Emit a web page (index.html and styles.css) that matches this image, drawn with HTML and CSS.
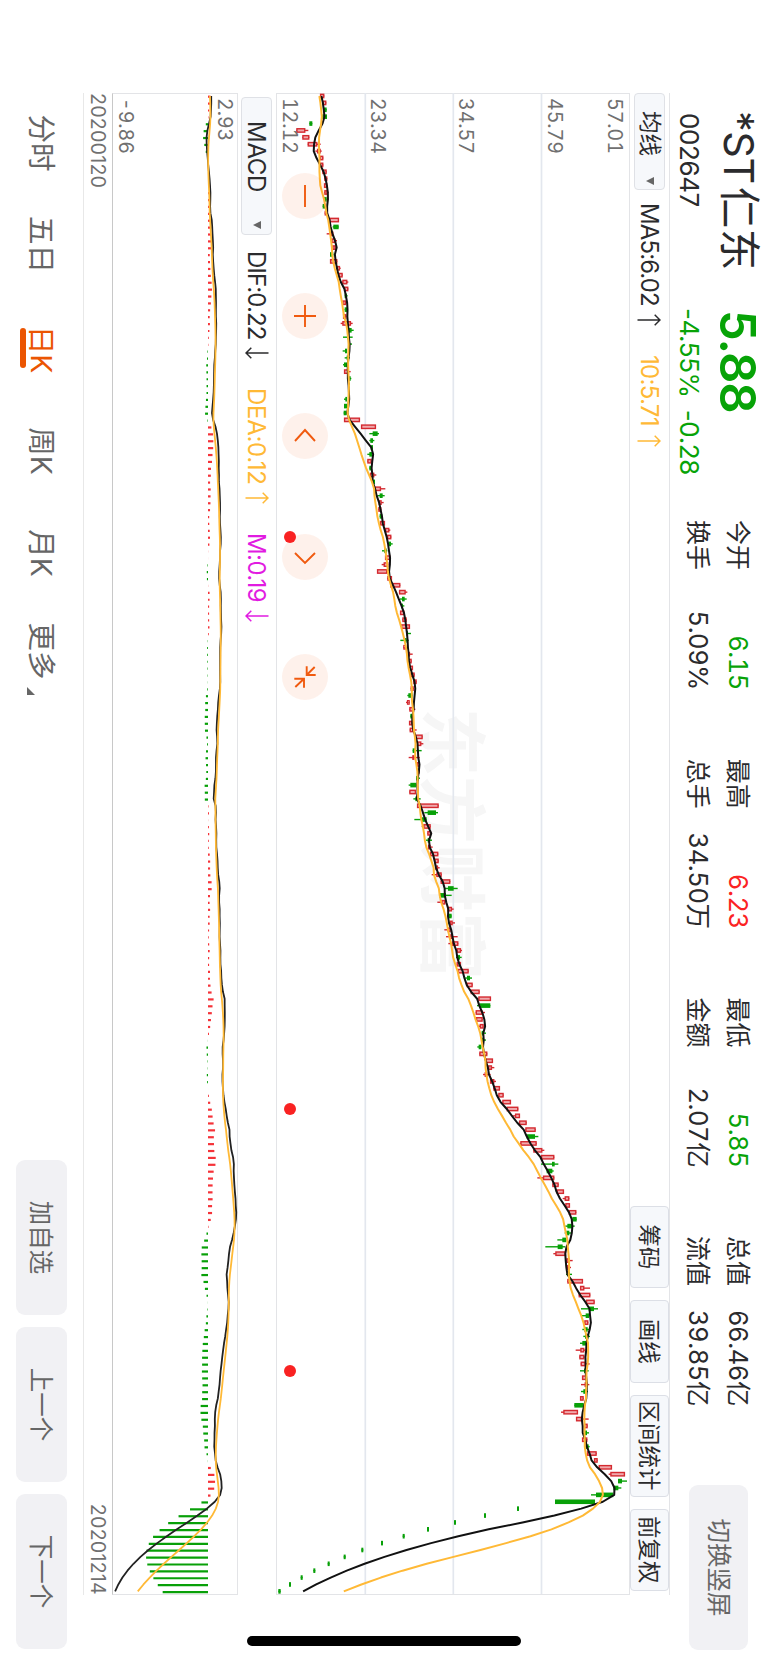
FILE: index.html
```html
<!DOCTYPE html>
<html lang="zh-CN">
<head>
    <meta charset="UTF-8">
    <meta name="viewport" content="width=device-width, initial-scale=1.0">
    <title>*ST仁东 002647</title>
    <link rel="stylesheet" href="styles.css">
</head>
<body>

    <!-- Landscape screen turned clockwise inside the portrait window -->
    <div class="screen">

        <!-- Quote header -->
        <header class="quote">
            <div class="stock">
                <div class="name"><span class="st">*ST</span>仁东</div>
                <div class="code">002647</div>
            </div>
            <div class="price down">
                <div class="last">5.88</div>
                <div class="change"><span>-4.55%</span><span>-0.28</span></div>
            </div>
            <div class="stats">
                <div class="stat"><span>今开</span><b class="down">6.15</b></div>
                <div class="stat"><span>最高</span><b class="up">6.23</b></div>
                <div class="stat"><span>最低</span><b class="down">5.85</b></div>
                <div class="stat"><span>总值</span><b>66.46亿</b></div>
                <div class="stat"><span>换手</span><b>5.09%</b></div>
                <div class="stat"><span>总手</span><b>34.50万</b></div>
                <div class="stat"><span>金额</span><b>2.07亿</b></div>
                <div class="stat"><span>流值</span><b>39.85亿</b></div>
            </div>
            <button class="btn rotate-btn">切换竖屏</button>
        </header>

        <!-- Charts -->
        <main class="charts">
            <div class="toolbar">
                <div class="select ma-select">均线<i class="caret"></i></div>
                <span class="ind ma5">MA5:6.02<svg class="arrow" viewBox="0 0 12 24"><path d="M6 23.5V1M.7 6.3L6 1l5.3 5.3"/></svg></span>
                <span class="ind ma10 yellow">10:5.71<svg class="arrow" viewBox="0 0 12 24"><path d="M6 23.5V1M.7 6.3L6 1l5.3 5.3"/></svg></span>
                <div class="tools">
                    <button>筹码</button>
                    <button>画线</button>
                    <button class="wide">区间统计</button>
                    <button>前复权</button>
                </div>
            </div>

            <div class="plot price-plot">
                <div class="watermark">东方财富</div>
                <svg id="priceChart" viewBox="0 0 1501 354"></svg>
                <ul class="scale">
                    <li>57.01</li>
                    <li>45.79</li>
                    <li>34.57</li>
                    <li>23.34</li>
                    <li>12.12</li>
                </ul>
                <div class="zoombar">
                    <svg viewBox="-23 -23 46 46"><path d="M-11 0H11"/></svg>
                    <svg viewBox="-23 -23 46 46"><path d="M-11 0H11M0-11V11"/></svg>
                    <svg viewBox="-23 -23 46 46"><path d="M5-10L-6 0 5 10"/></svg>
                    <svg viewBox="-23 -23 46 46"><path d="M-4-10L6 0-4 10"/></svg>
                    <svg viewBox="-23 -23 46 46"><path d="M-10.7-1.7H-2V-10.7M-2-1.7L-10-9.7M1.7 10.7V1H10.7M1.7 1L10 9.7"/></svg>
                </div>
                <i class="event e1"></i>
                <i class="event e2"></i>
                <i class="event e3"></i>
            </div>

            <div class="toolbar sub">
                <div class="select macd-select">MACD<i class="caret"></i></div>
                <span class="ind dif">DIF:0.22<svg class="arrow" viewBox="0 0 12 24"><path d="M6 .5V23M.7 17.7L6 23l5.3-5.3"/></svg></span>
                <span class="ind dea yellow">DEA:0.12<svg class="arrow" viewBox="0 0 12 24"><path d="M6 23.5V1M.7 6.3L6 1l5.3 5.3"/></svg></span>
                <span class="ind macd purple">M:0.19<svg class="arrow" viewBox="0 0 12 24"><path d="M6 .5V23M.7 17.7L6 23l5.3-5.3"/></svg></span>
            </div>

            <div class="plot macd-plot">
                <svg id="macdChart" viewBox="0 0 1501 125"></svg>
                <ul class="scale">
                    <li>2.93</li>
                    <li>-9.86</li>
                </ul>
            </div>

            <div class="dates"><span>20200120</span><span>20201214</span></div>
        </main>

        <!-- Period tabs and actions -->
        <footer class="footer">
            <nav class="tabs">
                <a>分时</a>
                <a>五日</a>
                <a class="active">日K</a>
                <a>周K</a>
                <a>月K</a>
                <a class="more">更多</a>
            </nav>
            <div class="actions">
                <button class="btn">加自选</button>
                <button class="btn">上一个</button>
                <button class="btn">下一个</button>
            </div>
        </footer>

        <div class="home-bar"></div>
    </div>

    <script src="chart.js"></script>
</body>
</html>
```
FILE: styles.css
```css
* {
    box-sizing: border-box;
}

html {
    overflow: hidden;
}

body {
    margin: 0;
    width: 768px;
    height: 1663px;
    overflow: hidden;
    background-color: #fff;
    color: #2b2b2d;
    font-family: Inter, "Noto Sans CJK SC", sans-serif;
}

button {
    border: none;
    padding: 0 0 3px;
    font-family: inherit;
    color: inherit;
}

ul {
    list-style: none;
    margin: 0;
    padding: 0;
}

.screen {
    position: relative;
    width: 1663px;
    height: 768px;
    display: flex;
    flex-direction: column;
    transform-origin: 0 0;
    transform: translateX(768px) rotate(90deg);
}

.up { color: #fb2323; }
.down { color: #07a307; }
.yellow { color: #ffb936; }
.purple { color: #e11be1; }

/* Quote header */
.quote {
    height: 98px;
    padding: 7px 13px 0 113px;
    display: flex;
    white-space: nowrap;
}

.stock {
    width: 197px;
}

.name {
    font-size: 41.5px;
    line-height: 44px;
    letter-spacing: 0.5px;
}

.st {
    letter-spacing: -0.5px;
    margin-left: -2px;
    margin-right: 3px;
}

.code,
.change {
    font-size: 26px;
    line-height: 32px;
    margin-top: 12px;
    letter-spacing: -0.4px;
}

.price {
    width: 210px;
}

.last {
    font-size: 49px;
    line-height: 46px;
    margin-top: 1px;
    font-weight: 600;
    letter-spacing: -1px;
}

.change {
    margin: 9px 0 0 -2px;
    display: flex;
    gap: 12px;
}

.stats {
    width: 884px;
    height: 80px;
    margin-top: 3px;
    display: grid;
    grid-template-columns: repeat(4, 168px);
    grid-template-rows: 40px 40px;
    column-gap: 70.7px;
    font-size: 25px;
    line-height: 40px;
}

.stat {
    display: flex;
    justify-content: space-between;
}

.stat b {
    margin-right: -2px;
    font-size: 25.5px;
    font-weight: 400;
    font-variant-numeric: tabular-nums;
    letter-spacing: -0.4px;
}

.btn {
    border-radius: 9px;
    background-color: #f1f1f4;
    color: #666;
    font-size: 24.5px;
}

.rotate-btn {
    width: 165px;
    height: 59px;
    margin: 13px 0 0 auto;
    padding-bottom: 5px;
}

/* Charts */
.charts {
    width: 1502px;
    margin-left: 93px;
}

.toolbar {
    position: relative;
    height: 40px;
    border-top: 1px solid #e3e4e7;
    display: flex;
    align-items: center;
    white-space: nowrap;
}

.toolbar.sub {
    height: 38px;
    border: none;
}

.select {
    height: 31px;
    border: 1px solid #dfe1e6;
    border-radius: 4px;
    background-color: #f6f8fb;
    display: flex;
    align-items: center;
    justify-content: space-between;
}

.ma-select {
    width: 97px;
    padding: 0 4px 2px 17px;
    font-size: 22.5px;
    line-height: 26px;
}

.macd-select {
    width: 138px;
    margin-left: 4px;
    padding: 0 5px 0 23px;
    font-size: 24px;
    letter-spacing: -0.3px;
}

.caret {
    border: 4.5px solid transparent;
    border-top: 8px solid #666;
    border-bottom: none;
}

.ind {
    display: flex;
    align-items: center;
    justify-content: space-between;
    font-size: 24px;
    letter-spacing: -0.9px;
}

.arrow {
    flex: none;
    width: 12px;
    height: 24px;
    fill: none;
    stroke: currentColor;
    stroke-width: 1.5;
}

.ma5 { width: 123px; margin-left: 13px; }
.ma10 { width: 92px; margin-left: 29px; letter-spacing: -0.7px; }
.dif { width: 108px; margin-left: 16px; }
.dea { width: 116px; margin-left: 29px; letter-spacing: -0.3px; }
.macd { width: 89px; margin-left: 29px; letter-spacing: -0.6px; }

.tools {
    height: 39px;
    margin: 0 4px 0 auto;
    display: flex;
    gap: 12px;
}

.tools button {
    width: 82.5px;
    border: 1px solid #dcdfe6;
    border-radius: 4px;
    background-color: #f6f8fb;
    font-size: 22.5px;
}

.tools .wide {
    width: 102px;
}

.plot {
    position: relative;
    border: 1px solid #e3e4e7;
}

.plot svg {
    display: block;
}

.price-plot {
    height: 354px;
}

.macd-plot {
    height: 126px;
    border-bottom-color: #c8c8c8;
}

#priceChart,
#macdChart {
    position: absolute;
    top: -1px;
    left: -1px;
    width: 1501px;
    overflow: visible;
}

.watermark {
    position: absolute;
    inset: -8px 0 0;
    display: flex;
    align-items: center;
    justify-content: center;
    font-size: 68px;
    font-weight: 700;
    color: #f6f6f6;
}

.scale {
    position: absolute;
    inset: 2px auto 3px 4px;
    display: flex;
    flex-direction: column;
    justify-content: space-between;
    font-size: 19.5px;
    line-height: 20px;
    font-variant-numeric: tabular-nums;
    color: #707070;
}

.price-plot .scale {
    top: 4px;
    gap: 68.3px;
    justify-content: flex-start;
}

.price-plot .scale li:first-child {
    margin-bottom: -28px;
}

.zoombar {
    position: absolute;
    left: 79px;
    bottom: 5px;
    display: flex;
    gap: 74.2px;
}

.zoombar svg {
    width: 46px;
    height: 46px;
    border-radius: 50%;
    background-color: rgba(245, 95, 20, 0.085);
    fill: none;
    stroke: #f05a0f;
    stroke-width: 1.9;
}

.event {
    position: absolute;
    bottom: 7px;
    width: 12px;
    height: 12px;
    border-radius: 50%;
    background-color: #f92222;
}

.e1 { left: 437px; }
.e2 { left: 1009px; }
.e3 { left: 1271px; }

.dates {
    height: 29px;
    border-bottom: 1px solid #e8e8e8;
    display: flex;
    justify-content: space-between;
    font-size: 19.5px;
    line-height: 28px;
    letter-spacing: 0.3px;
    color: #707070;
}

/* Footer */
.footer {
    flex: 1;
    padding: 16px 14px 0 93px;
    display: flex;
    justify-content: space-between;
}

.tabs {
    height: 51px;
    display: grid;
    grid-template-columns: 100px 103px 107px 96px 108px 88px;
    font-size: 28.5px;
    line-height: 51px;
    color: #666;
    text-align: center;
}

.tabs a {
    position: relative;
}

.tabs .active {
    color: #eb5502;
}

.tabs .active::after {
    content: "";
    position: absolute;
    left: 32px;
    bottom: 4px;
    width: 40px;
    height: 6px;
    border-radius: 3px;
    background-color: #eb5502;
}

.tabs .more::after {
    content: "";
    position: absolute;
    right: 0;
    bottom: 11px;
    border-left: 8px solid transparent;
    border-bottom: 8px solid #666;
}

.actions {
    height: 51px;
    display: flex;
    gap: 12px;
}

.actions .btn {
    width: 155px;
}

.home-bar {
    position: absolute;
    top: 247px;
    right: 17px;
    width: 10px;
    height: 274px;
    border-radius: 5px;
    background-color: #000;
}
```
FILE: chart.js
```js
// Daily candles: direction (r up / g down), body low, body high, [wick low, wick high].
// Levels are counted in thirds of a pixel, the chart floor (12.12) is 18.
const raw = `
r150,163|r158,169|g161,170|g157,171|g118,127|r79,106,79,115|r97,118|r113,142,113,152|r141,152,136,155|r149,160
r150,160|r157,170|r163,172|r162,172|r163,173,163,176|g162,170|g158,168|r164,173|r178,207|g190,206,188,206
r182,190,170,190|r184,196,184,201|r187,197|g180,190|r180,202|r200,210,200,212|r205,218|r217,232,215,235|r222,235|g224,231,224,233
r217,228,217,231|g224,233|r219,229|r217,243,212,248|g235,245,235,251|g232,236,219,248|g236,240,236,246|g225,231,218,231|g230,236,224,240|g222,232,219,232
r222,235,222,242|g236,242,236,244|g236,240|g235,239|g226,231,222,231|g222,232|g221,230|r222,270|r273,318|g308,323,298,327
g301,309,298,313|g302,309|g298,306,292,306|r292,305|g298,306|r300,313,300,319|g307,315|r314,333,314,346|g329,338,322,344|r326,335,326,341
r325,334|g329,337|r330,345|r345,358,345,361|r351,364|g355,363,355,368|g343,350,336,352|r345,361|r341,355,335,355|r321,352
r352,366|r361,391|r387,407,387,412|g396,404,390,410|g393,399,393,403|r390,403|r397,410|r393,420|g409,414,409,423|g402,410,391,416
r400,408|r414,420,414,428|r414,425|r417,429|r421,434|r430,440|r422,431|g415,428,412,428|r411,419,408,419|r418,430,418,436
g421,430|r417,428|r419,431,419,440|r434,458|r441,454,441,460|g428,436,428,455|r427,433,416,449|r440,449|r443,449|g438,446,438,450
g421,439,416,439|r418,438|g436,445,430,452|r441,506|g473,498,463,504|g455,470,433,470|r460,482,455,482|r472,483|g473,480,468,486|r474,482,474,488
r480,505|r493,506|r496,504,496,509|r499,515,485,515|r512,541|g534,551,524,563|g508,528,508,545|r514,526,502,526|r532,546,532,551|g536,545
r539,548,539,555|r533,542,523,542|r538,546,528,563|r546,565,535,565|r560,573,560,576|g563,570,558,575|r560,573|r563,596|g591,600,585,606|r590,608
r602,629|r625,663|g628,661,621,661|r617,637,617,645|r618,638|r629,641,625,641|g635,642,635,648|g635,642,635,648|g626,634,622,634|r628,652
r647,669|r654,666,654,673|r644,652,639,662|r660,673,660,678|r670,690|r685,701|r697,723|r710,745|r735,750,728,750|r747,770
r766,797|g770,795,770,805|r751,800|r790,817,790,823|r813,853|g846,854,813,865|g830,847,830,851|r819,853,802,853|r847,866|r860,882
r884,898,878,898|r886,900|r896,919|g907,920|g892,908,886,914|g889,898,884,903|g877,889,862,889|g863,878,826,885|r856,888,850,888|r889,899,889,908
r890,898,890,903|g893,900,888,906|r892,939|r930,943,930,960|r926,961|r948,974|g956,972,933,984|g947,957,933,957|r943,955|g943,953,937,957
g945,955,940,960|g937,950,930,956|r931,943,917,948|r928,943|r932,947,932,959|g942,949,930,956|r936,949|r944,952,933,958|g940,949,933,954|r930,941
g913,941|r880,924,873,924|r918,939,918,956|r942,953|g942,951,942,957|r936,952|g947,956,947,959|r951,980|r972,983|r986,1026
r1021,1065,1016,1065|g1044,1056,1044,1071|g1030,1045,1030,1054|g978,1030,963,1030|g855,975|g741,747|g642,648|g552,558|g471,477|g398,404
g333,339|g274,280|g221,227|g173,179|g130,136|g92,98|g57,63|g25,32`;

const candles = raw.trim().split(/[|\n]/).map(item => {
    const [a, b, lo = a, hi = b] = item.slice(1).split(",").map(Number);
    return { up: item[0] === "r", a, b, lo, hi, close: item[0] === "r" ? b : a };
});

const STEP = 6.891;
const xAt = i => 3 + i * STEP;
const yAt = level => 354 - (level - 18) / 3;
const line = (points, color, width = 2) =>
    `<polyline points="${points.map(p => p.map(n => n.toFixed(2)).join()).join(" ")}" fill="none" stroke="${color}" stroke-width="${width}" stroke-linejoin="round"/>`;

// Price chart
let price = "";
[88.5, 176.7, 264.7].forEach(y => {
    price += `<path d="M0 ${y}H1501" stroke="#e3e7ee" stroke-width="1.7"/>`;
});

candles.forEach((c, i) => {
    const x = xAt(i);
    const color = c.up ? "#d42a30" : "#08a008";
    const top = yAt(c.b);
    const height = (c.b - c.a) / 3;
    price += `<path d="M${x} ${yAt(c.hi)}V${yAt(c.lo)}" stroke="${color}" stroke-width="1.4"/>`;
    if (c.up) {
        price += `<rect x="${x - 1.7}" y="${top + 0.6}" width="3.4" height="${Math.max(height - 1.2, 0.6)}" fill="#f0a9ac" stroke="${color}" stroke-width="1.4"/>`;
    } else {
        price += `<rect x="${x - 2.3}" y="${top}" width="4.6" height="${height}" fill="${color}"/>`;
    }
});

// Closes before the first visible day, for the moving averages
const closes = [138, 138, 138, 138, 138, 147, 147, 147, 147].concat(candles.map(c => c.close));
const average = days => candles.map((c, i) => {
    const part = closes.slice(i + 10 - days, i + 10);
    return [xAt(i), yAt(part.reduce((s, n) => s + n, 0) / days + 4)];
});
price += line(average(5), "#111") + line(average(10), "#ffb936");
document.getElementById("priceChart").innerHTML = price;

// MACD 12, 26, 9
const toPrice = level => 12.12 + (level - 18) / 3 / 7.86;
const ZERO = 30;
const UNIT = 9.58;
let fast = 18.2, slow = 17.9, dea = 0.12;
let bars = "";
const difLine = [], deaLine = [];
candles.forEach((c, i) => {
    const close = toPrice(c.close);
    fast += (close - fast) * 2 / 13;
    slow += (close - slow) * 2 / 27;
    const dif = fast - slow;
    dea += (dif - dea) * 0.2;
    const bar = 2 * (dif - dea);
    const x = xAt(i) + 0.7;
    bars += `<path d="M${x} ${ZERO}V${ZERO - bar * UNIT}" stroke="${bar > 0 ? "#f53238" : "#08a008"}" stroke-width="2.2"/>`;
    difLine.push([xAt(i), ZERO - 0.5 - dif * UNIT]);
    deaLine.push([xAt(i), ZERO - 0.5 - dea * UNIT]);
});
document.getElementById("macdChart").innerHTML = bars + line(difLine, "#222", 1.8) + line(deaLine, "#ffb936", 1.8);
```
